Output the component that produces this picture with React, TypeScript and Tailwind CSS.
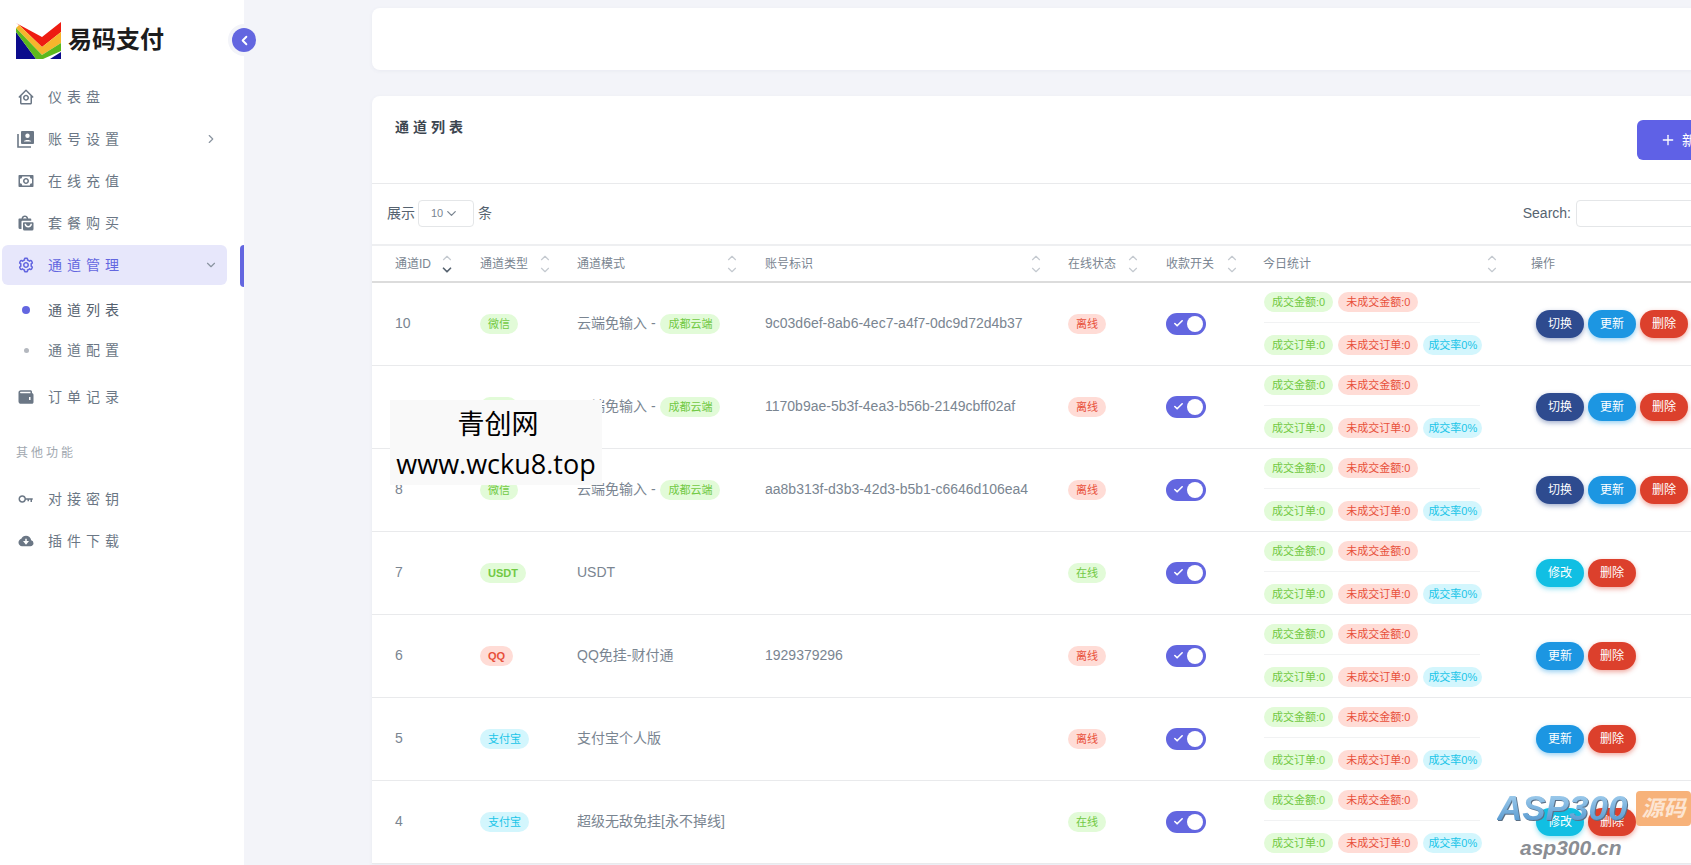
import { ReactNode } from "react";
import {
  BiCog,
  BiHomeCircle,
  BiKey,
  BiMoney,
  BiSolidCloudDownload,
  BiSolidShoppingBags,
  BiSolidWallet,
} from "react-icons/bi";
import { Check, ChevronDown, ChevronLeft, ChevronRight, ChevronUp, Plus } from "lucide-react";

function Logo() {
  return (
    <svg width="45" height="37" viewBox="0 0 45 37" className="shrink-0">
      <polygon points="0,10 20,37 0,37" fill="#0b0b8c" />
      <polygon points="34,37 45,30 45,37" fill="#0b0b8c" />
      <polygon points="0,1 26,15 45,0 45,10 26,25 3,3" fill="#ee1c12" />
      <polygon points="3,3 26,25 45,10 45,21 26,33 0,6" fill="#f6b52c" />
      <polygon points="0,6 26,33 45,21 45,29 27,37 20,37 0,10" fill="#5cb81c" />
    </svg>
  );
}

function ContactIcon() {
  return (
    <svg width="18" height="18" viewBox="0 0 18 18" fill="none">
      <path d="M1 4v13h13" stroke="#6b7785" strokeWidth="1.6" />
      <rect x="4" y="1" width="13" height="13" rx="1" fill="#6b7785" />
      <circle cx="10.5" cy="5.8" r="2.2" fill="#fff" />
      <path d="M6.8 11.5c.6-2 6.8-2 7.4 0z" fill="#fff" />
    </svg>
  );
}

function NavItem({ icon, label, active, arrow }: { icon: ReactNode; label: string; active?: boolean; arrow?: "right" | "down" }) {
  return (
    <div
      className={
        active
          ? "relative mb-[2px] ml-0.5 mr-[17px] flex h-10 items-center rounded-md bg-[#e7e7fb] pl-[15px] pr-[9px] text-[#6366e0]"
          : "relative mb-[2px] ml-0.5 mr-[17px] flex h-10 items-center rounded-md pl-[15px] pr-[9px] text-[#6b7785]"
      }
    >
      <span className="flex w-[31px] shrink-0 items-center text-[18px]">{icon}</span>
      <span className="flex-1 text-[14px] tracking-[5px]">{label}</span>
      {arrow === "right" && <ChevronRight size={14} className="text-[#8a94a0]" />}
      {arrow === "down" && <ChevronDown size={14} className="text-[#8a94a0]" />}
      {active && <span className="absolute -right-[17px] top-0 h-[42px] w-1 rounded-l-sm bg-[#6366e0]" />}
    </div>
  );
}

function Sidebar() {
  return (
    <aside className="relative w-[244px] shrink-0 bg-white">
      <div className="flex h-[77px] items-start pl-4 pt-[22px]">
        <Logo />
        <span className="ml-[7px] mt-[2px] text-[24px] font-bold leading-8 text-[#1c1c1c]">易码支付</span>
      </div>
      <span className="absolute -right-3 top-7 flex h-6 w-6 items-center justify-center rounded-full bg-[#6366e0] text-white ring-4 ring-[#f3f4f9]">
        <ChevronLeft size={15} strokeWidth={3} />
      </span>
      <NavItem icon={<BiHomeCircle />} label="仪表盘" />
      <NavItem icon={<ContactIcon />} label="账号设置" arrow="right" />
      <NavItem icon={<BiMoney />} label="在线充值" />
      <NavItem icon={<BiSolidShoppingBags />} label="套餐购买" />
      <NavItem icon={<BiCog />} label="通道管理" active arrow="down" />
      <div className="mt-[5px] flex h-10 items-center text-[14px] tracking-[5px] text-[#56626f]">
        <span className="flex w-[48px] justify-center pl-[5px] pr-px">
          <span className="h-2 w-2 rounded-full bg-[#6366e0]" />
        </span>
        通道列表
      </div>
      <div className="flex h-10 items-center text-[14px] tracking-[5px] text-[#6b7785]">
        <span className="flex w-[48px] justify-center pl-[5px] pr-px">
          <span className="h-[5px] w-[5px] rounded-full bg-[#b4b8bf]" />
        </span>
        通道配置
      </div>
      <div className="mt-[7px]">
        <NavItem icon={<BiSolidWallet />} label="订单记录" />
      </div>
      <div className="mt-[16px] flex h-10 items-center pl-4 text-[12px] tracking-[3px] text-[#a1a8b0]">其他功能</div>
      <div className="mt-[6px]">
        <NavItem icon={<BiKey />} label="对接密钥" />
        <NavItem icon={<BiSolidCloudDownload />} label="插件下载" />
      </div>
    </aside>
  );
}

function SortArrows({ active }: { active?: boolean }) {
  return (
    <span className="flex shrink-0 flex-col items-center">
      <ChevronUp size={14} className="text-[#c5cad0]" />
      <ChevronDown size={14} className={active ? "-mt-[2px] text-[#56626f]" : "-mt-[2px] text-[#c5cad0]"} strokeWidth={active ? 3 : 2} />
    </span>
  );
}

const columns = [
  { label: "通道ID", width: "w-[85px]", pad: "pr-[3px]", active: true },
  { label: "通道类型", width: "w-[97px]", pad: "pr-[2px]" },
  { label: "通道模式", width: "w-[188px]", pad: "pr-[3px]" },
  { label: "账号标识", width: "w-[303px]", pad: "pr-[2px]" },
  { label: "在线状态", width: "w-[98px]", pad: "pr-[3px]" },
  { label: "收款开关", width: "w-[97px]", pad: "pr-[1px]" },
  { label: "今日统计", width: "w-[268px]", pad: "pr-[9px]" },
];

const greenPill = "bg-[#e2fbd8] text-[#71c943]";
const redPill = "bg-[#ffdcd6] text-[#e8503a]";
const cyanPill = "bg-[#d3f6fd] text-[#1ac5e8]";

function Pill({ className, children }: { className: string; children: ReactNode }) {
  return <span className={"inline-flex h-5 items-center whitespace-nowrap rounded-full px-2 text-[11px] " + className}>{children}</span>;
}

function ActionButton({ className, label }: { className: string; label: string }) {
  return (
    <button className={"flex h-7 w-12 items-center justify-center rounded-full text-[12px] text-white " + className}>
      {label}
    </button>
  );
}

const qieHuan = <ActionButton className="bg-[#2e4b8f] shadow-[0_2px_5px_rgba(46,75,143,0.45)]" label="切换" />;
const gengXin = <ActionButton className="bg-[#1c96e2] shadow-[0_2px_5px_rgba(28,150,226,0.45)]" label="更新" />;
const shanChu = <ActionButton className="bg-[#dc402c] shadow-[0_2px_5px_rgba(220,64,44,0.45)]" label="删除" />;
const xiuGai = <ActionButton className="bg-[#11bfe3] shadow-[0_2px_5px_rgba(17,191,227,0.45)]" label="修改" />;

const yunduan = (
  <>
    云端免输入 - <Pill className={"ml-px " + greenPill}>成都云端</Pill>
  </>
);

const rows = [
  { id: 10, type: "微信", typeClass: greenPill, mode: yunduan, account: "9c03d6ef-8ab6-4ec7-a4f7-0dc9d72d4b37", online: false, actions: [qieHuan, gengXin, shanChu] },
  { id: 9, type: "微信", typeClass: greenPill, mode: yunduan, account: "1170b9ae-5b3f-4ea3-b56b-2149cbff02af", online: false, actions: [qieHuan, gengXin, shanChu] },
  { id: 8, type: "微信", typeClass: greenPill, mode: yunduan, account: "aa8b313f-d3b3-42d3-b5b1-c6646d106ea4", online: false, actions: [qieHuan, gengXin, shanChu] },
  { id: 7, type: "USDT", typeClass: greenPill + " font-bold", mode: "USDT", account: "", online: true, actions: [xiuGai, shanChu] },
  { id: 6, type: "QQ", typeClass: redPill + " font-bold", mode: "QQ免挂-财付通", account: "1929379296", online: false, actions: [gengXin, shanChu] },
  { id: 5, type: "支付宝", typeClass: cyanPill, mode: "支付宝个人版", account: "", online: false, actions: [gengXin, shanChu] },
  { id: 4, type: "支付宝", typeClass: cyanPill, mode: "超级无敌免挂[永不掉线]", account: "", online: true, actions: [xiuGai, shanChu] },
];

function Toggle() {
  return (
    <span className="flex h-[22px] w-10 items-center justify-between rounded-full bg-[#6366e0] pl-[7px] pr-[3px]">
      <Check size={11} strokeWidth={3.5} className="text-white" />
      <span className="h-4 w-4 rounded-full bg-white" />
    </span>
  );
}

function ChannelTable() {
  return (
    <table className="w-[1319px] table-fixed border-collapse text-[14px] text-[#7a8591]">
      <thead>
        <tr className="h-[37px] border-y-2 border-t-[#eeeff1] border-b-[#dcdcdc]">
          {columns.map((col) => (
            <th key={col.label} className={col.width + " whitespace-nowrap p-0 text-left text-[12px] font-normal"}>
              <div className={"flex items-center justify-between pl-[23px] " + col.pad}>
                {col.label}
                <SortArrows active={col.active} />
              </div>
            </th>
          ))}
          <th className="p-0 pl-[23px] text-left text-[12px] font-normal">操作</th>
        </tr>
      </thead>
      <tbody>
        {rows.map((row) => (
          <tr key={row.id} className="h-[83px] border-b border-[#e9eaec]">
            <td className="p-0 pl-[23px]">{row.id}</td>
            <td className="p-0 pl-[23px]">
              <Pill className={row.typeClass}>{row.type}</Pill>
            </td>
            <td className="whitespace-nowrap p-0 pl-[23px]">{row.mode}</td>
            <td className="p-0 pl-[23px]">{row.account}</td>
            <td className="p-0 pl-[23px]">
              {row.online ? <Pill className={greenPill}>在线</Pill> : <Pill className={redPill}>离线</Pill>}
            </td>
            <td className="p-0 pl-[23px]">
              <Toggle />
            </td>
            <td className="p-0 pl-[24px]">
              <div className="flex gap-[5px]">
                <Pill className={greenPill}>成交金额:0</Pill>
                <Pill className={redPill}>未成交金额:0</Pill>
              </div>
              <div className="mb-3 mt-[10px] w-[216px] border-t border-[#f1f2f3]" />
              <div className="flex gap-[5px]">
                <Pill className={greenPill}>成交订单:0</Pill>
                <Pill className={redPill}>未成交订单:0</Pill>
                <Pill className={cyanPill + " px-[5px]"}>成交率0%</Pill>
              </div>
            </td>
            <td className="p-0 pl-[28px]">
              <div className="flex gap-1">
                {row.actions.map((action, i) => (
                  <span key={i}>{action}</span>
                ))}
              </div>
            </td>
          </tr>
        ))}
      </tbody>
    </table>
  );
}

function Watermarks() {
  return (
    <>
      <div className="absolute left-[390px] top-[400px] flex h-[85px] w-[212px] flex-col items-center bg-[#f9f9f9] font-['Open_Sans','Noto_Sans_CJK_SC',sans-serif] text-black">
        <span className="whitespace-nowrap pl-1 text-[27px] leading-[48px]">青创网</span>
        <span className="whitespace-nowrap text-[27px] leading-[32px]">www.wcku8.top</span>
      </div>
      <div className="absolute left-[1497px] top-[790px] w-[194px]">
        <div className="flex items-center">
          <span className="bg-linear-to-b from-[#a9d3f0] to-[#4d93cc] bg-clip-text pr-1 text-[35px] font-bold italic leading-9 text-transparent drop-shadow-[1px_1px_0_#5a6f85]">
            ASP300
          </span>
          <span className="ml-auto flex h-[35px] w-[55px] items-center justify-center rounded-sm bg-[#f7b27a] text-[22px] font-bold italic text-[#fde5d2]">
            源码
          </span>
        </div>
        <div className="ml-[23px] mt-[8px] text-[21px] font-bold italic leading-7 text-[#8a8d93]">asp300.cn</div>
      </div>
    </>
  );
}

export default function App() {
  return (
    <div className="relative flex h-[865px] w-[1691px] overflow-hidden bg-[#f3f4f9] font-['Liberation_Sans','Noto_Sans_CJK_SC',sans-serif]">
      <Sidebar />
      <main className="min-w-0 flex-1 pl-[128px] pt-2">
        <div className="h-[62px] w-[1340px] rounded-lg bg-white shadow-[0_1px_4px_rgba(67,89,113,0.06)]" />
        <div className="mt-[26px] w-[1340px] rounded-t-lg bg-white shadow-[0_1px_4px_rgba(67,89,113,0.06)]">
          <div className="flex h-[88px] justify-between border-b border-[#e9eaec] pl-[23px]">
            <h2 className="whitespace-nowrap pt-[21px] text-[14px] font-semibold leading-5 tracking-[4px] text-[#3c4650]">通道列表</h2>
            <button className="-mr-[45px] mt-6 flex h-10 w-[120px] shrink-0 items-center gap-1.5 whitespace-nowrap rounded-md bg-[#5f61e6] pl-[23px] text-[14px] text-white">
              <Plus size={16} />
              新增通道
            </button>
          </div>
          <div className="flex h-[60px] items-center pb-px pl-[15px] text-[14px] text-[#566370]">
            展示
            <span className="ml-[3px] mr-[4px] flex h-[27px] w-[56px] items-center rounded border border-[#e4e6e8] pl-3 text-[11px] text-[#7a8591]">
              10
              <ChevronDown size={15} className="ml-px" />
            </span>
            条
            <span className="ml-auto">Search:</span>
            <span className="ml-[5px] mr-[11px] h-[27px] w-[125px] rounded border border-[#e4e6e8]" />
          </div>
          <ChannelTable />
        </div>
      </main>
      <Watermarks />
    </div>
  );
}
